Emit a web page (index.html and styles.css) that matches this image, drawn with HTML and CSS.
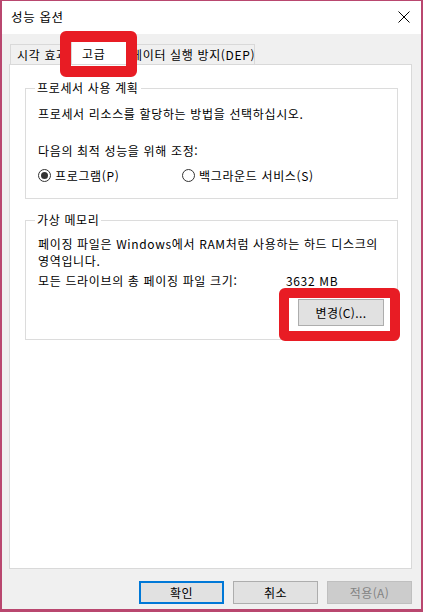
FILE: index.html
```html
<!DOCTYPE html>
<html lang="ko">
<head>
    <meta charset="UTF-8">
    <meta name="viewport" content="width=device-width, initial-scale=1.0">
    <title>성능 옵션</title>
    <link rel="stylesheet" href="styles.css">
</head>
<body>

<div class="window">
    <div class="titlebar">
        <span class="title">성능 옵션</span>
        <svg class="close" width="12" height="12" viewBox="0 0 12 12">
            <path d="M0.5 0.5 L11.5 11.5 M11.5 0.5 L0.5 11.5" stroke="#000" stroke-width="1" fill="none"/>
        </svg>
    </div>

    <div class="dialog">
        <div class="tabs">
            <div class="tab first">시각 효과</div>
            <div class="tab active">고급</div>
            <div class="tab last">데이터 실행 방지(DEP)</div>
            <div class="mark mark-tab"></div>
        </div>

        <div class="panel">
            <fieldset class="group group-cpu">
                <legend>프로세서 사용 계획</legend>
                <p class="line">프로세서 리소스를 할당하는 방법을 선택하십시오.</p>
                <p class="line gap-big">다음의 최적 성능을 위해 조정:</p>
                <div class="radios">
                    <label class="radio first"><span class="dot checked"></span>프로그램(P)</label>
                    <label class="radio"><span class="dot"></span>백그라운드 서비스(S)</label>
                </div>
            </fieldset>

            <fieldset class="group group-mem">
                <legend>가상 메모리</legend>
                <p class="line">페이징 파일은 Windows에서 RAM처럼 사용하는 하드 디스크의<br>영역입니다.</p>
                <div class="line size-row">
                    <span class="size-label">모든 드라이브의 총 페이징 파일 크기:</span>
                    <span>3632 MB</span>
                </div>
                <div class="change-row">
                    <button class="btn change">변경(C)...</button>
                    <div class="mark mark-btn"></div>
                </div>
            </fieldset>
        </div>

        <div class="footer">
            <button class="btn default">확인</button>
            <button class="btn">취소</button>
            <button class="btn disabled">적용(A)</button>
        </div>
    </div>
</div>

</body>
</html>
```

FILE: styles.css
```css
body {
    margin: 0;
    font-family: "Noto Sans CJK KR", "Noto Sans", sans-serif;
    font-size: 12px;
    letter-spacing: 0.65px;
    color: #000;
    background: #fff;
}
.window {
    width: 423px;
    height: 612px;
    box-sizing: border-box;
    border: 2px solid #b9476f;
    border-top-width: 1px;
    border-bottom-width: 3px;
    background-color: #f0f0f0;
    display: flex;
    flex-direction: column;
}
.titlebar {
    height: 31px;
    background-color: #fff;
    display: flex;
    align-items: center;
    justify-content: space-between;
    padding: 0 11px 2px 9px;
}
.title {
    font-size: 12.5px;
}
.close {
    display: block;
}
.dialog {
    flex: 1;
    display: flex;
    flex-direction: column;
    padding: 10px 9px 0 7px;
}
.tabs {
    position: relative;
    display: flex;
    height: 20px;
    padding-left: 1px;
}
.tab {
    height: 20px;
    box-sizing: border-box;
    border: 1px solid #d9d9d9;
    border-bottom: none;
    border-left: none;
    background: #f0f0f0;
    padding: 0 6px;
    line-height: 19px;
    white-space: nowrap;
    overflow: hidden;
}
.tab.first {
    border-left: 1px solid #d9d9d9;
    width: 63px;
}
.tab.active {
    width: 56px;
    height: 24px;
    margin: -4px -2px 0 -2px;
    background: #fff;
    border-left: 1px solid #d9d9d9;
    position: relative;
    z-index: 1;
    padding: 3px 0 0 10px;
}
.tab.last {
    width: 130px;
}
.mark {
    position: absolute;
    border: 11px solid #e81c24;
    border-radius: 6px;
    box-sizing: border-box;
    z-index: 2;
}
.mark-tab {
    left: 51px;
    top: -13px;
    width: 77px;
    height: 46px;
}
.panel {
    height: 505px;
    box-sizing: border-box;
    background: #fff;
    border: 1px solid #d9d9d9;
    padding: 15px 13px 0 15px;
}
.group {
    margin: 0;
    border: 1px solid #dcdcdc;
    padding: 0 0 0 12px;
}
.group legend {
    padding: 0 2px;
    margin-left: -3px;
    line-height: 16px;
}
.line {
    margin: 0;
    line-height: 17px;
}
.group-cpu {
    padding-top: 9px;
    padding-bottom: 14px;
}
.gap-big {
    margin-top: 20px;
}
.radios {
    display: flex;
    margin-top: 8px;
    line-height: 17px;
}
.radio {
    display: flex;
    align-items: center;
    gap: 4px;
}
.radio.first {
    width: 144px;
}
.dot {
    width: 13px;
    height: 13px;
    box-sizing: border-box;
    border: 1px solid #333;
    border-radius: 50%;
    display: flex;
    align-items: center;
    justify-content: center;
}
.dot.checked::after {
    content: "";
    width: 7px;
    height: 7px;
    border-radius: 50%;
    background: #333;
}
.group-mem {
    margin-top: 13px;
    padding-top: 7px;
    padding-bottom: 13px;
}
.size-row {
    display: flex;
    margin-top: 3px;
}
.size-label {
    width: 248px;
    flex-shrink: 0;
}
.change-row {
    position: relative;
    display: flex;
    justify-content: flex-end;
    margin-top: 10px;
    padding-right: 13px;
}
.btn {
    font-family: inherit;
    font-size: 12px;
    letter-spacing: 0.4px;
    width: 85px;
    height: 23px;
    padding: 0;
    margin: 0;
    border: 1px solid #adadad;
    background: #e1e1e1;
    color: #000;
}
.change {
    width: 86px;
    height: 27px;
    position: relative;
    z-index: 1;
}
.mark-btn {
    right: -3px;
    top: -11px;
    width: 121px;
    height: 53px;
    border-width: 10px;
    z-index: 2;
}
.footer {
    display: flex;
    justify-content: flex-end;
    gap: 9px;
    padding-top: 12px;
}
.btn.default {
    border: 2px solid #0078d7;
}
.btn.disabled {
    background: #cccccc;
    border-color: #bfbfbf;
    color: #838383;
}
```
